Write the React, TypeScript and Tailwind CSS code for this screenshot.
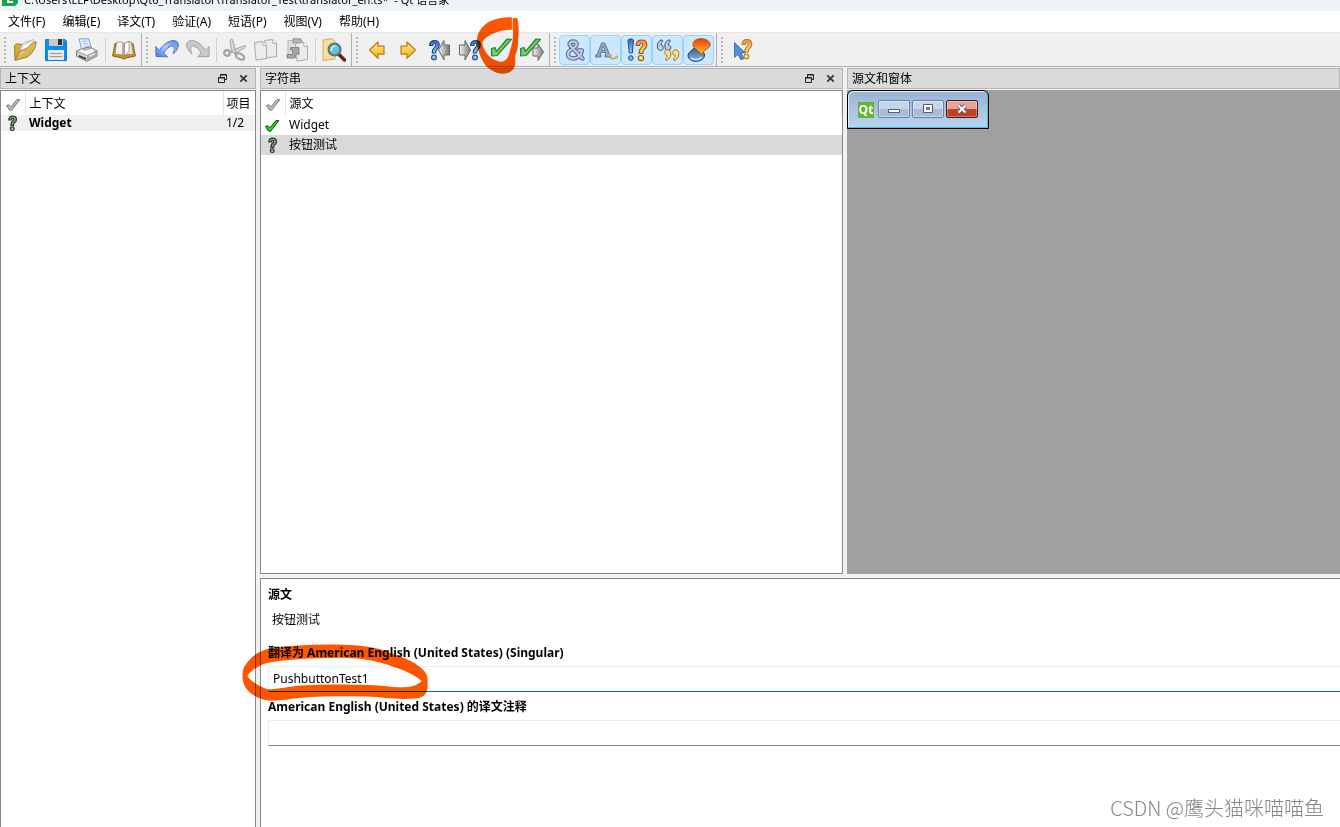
import React from "react";

type IconProps = { children: React.ReactNode };

function Svg({ children }: IconProps) {
  return (
    <svg viewBox="0 0 24 24" className="h-6 w-6 shrink-0" fill="none" aria-hidden="true">
      {children}
    </svg>
  );
}

function Defs() {
  return (
    <svg className="absolute h-0 w-0" aria-hidden="true">
      <defs>
        <linearGradient id="gold" x1="0" y1="0" x2="0" y2="1">
          <stop offset="0" stopColor="#fff29a" />
          <stop offset="1" stopColor="#f5a800" />
        </linearGradient>
        <linearGradient id="folder" x1="0" y1="0" x2="1" y2="1">
          <stop offset="0" stopColor="#f7e08e" />
          <stop offset="1" stopColor="#c8962a" />
        </linearGradient>
        <linearGradient id="blue" x1="0" y1="0" x2="0" y2="1">
          <stop offset="0" stopColor="#2f62c4" />
          <stop offset="1" stopColor="#8fd0ff" />
        </linearGradient>
        <linearGradient id="undo" x1="0" y1="1" x2="1" y2="0">
          <stop offset="0" stopColor="#3f78f2" />
          <stop offset="0.5" stopColor="#a9cbff" />
          <stop offset="1" stopColor="#5584dc" />
        </linearGradient>
        <linearGradient id="grey" x1="0" y1="0" x2="1" y2="0">
          <stop offset="0" stopColor="#f2f2f2" />
          <stop offset="1" stopColor="#777777" />
        </linearGradient>
        <linearGradient id="orange" x1="0" y1="0" x2="0" y2="1">
          <stop offset="0" stopColor="#ff8a3c" />
          <stop offset="1" stopColor="#ffe27a" />
        </linearGradient>
        <linearGradient id="flame" x1="0" y1="0" x2="0" y2="1">
          <stop offset="0" stopColor="#f03a08" />
          <stop offset="1" stopColor="#ffc928" />
        </linearGradient>
        <linearGradient id="drop" x1="0" y1="0" x2="0" y2="1">
          <stop offset="0" stopColor="#23477e" />
          <stop offset="1" stopColor="#7db4ea" />
        </linearGradient>
        <linearGradient id="green" x1="0" y1="0" x2="1" y2="1">
          <stop offset="0" stopColor="#3fae3f" />
          <stop offset="1" stopColor="#a9e8a4" />
        </linearGradient>
      </defs>
    </svg>
  );
}

const QPATH = "M1 5.2C1 1.9 3.2.4 5.6.4c2.7 0 4.7 1.6 4.7 4.4 0 2.2-1.2 3.3-2.4 4.3-.9.8-1.1 1.3-1.1 3.3H3.6c0-3 .4-4 1.8-5.2 1-.9 1.5-1.3 1.5-2.3 0-.9-.5-1.5-1.4-1.5-.9 0-1.4.6-1.4 1.8z";

function Question({ fill, stroke, dot }: { fill: string; stroke: string; dot: string }) {
  return (
    <g stroke={stroke} strokeWidth="1">
      <path d={QPATH} fill={fill} />
      <circle cx="5.2" cy="16.6" r="2.3" fill={dot} />
    </g>
  );
}

function OpenIcon() {
  return (
    <Svg>
      <path d="M1.5 7.5 3 6h4l1 1 7-3.5 2 1L6 21l-4 1z" fill="#d9aa38" stroke="#9c7a2a" />
      <path d="M5.5 14 10 5.5l10-4 1.5 4L12 14z" fill="#fff" stroke="#b5b09a" strokeWidth=".8" />
      <path d="m7 12.5 4-6 9-3.5" stroke="#ccc" />
      <path d="M2.2 22.3 7 12.6c5-.7 9-3 11.7-7l4.4-1.9c-.4 7-4 12-9 15.3z" fill="url(#folder)" stroke="#a37a22" />
    </Svg>
  );
}

function SaveIcon() {
  return (
    <Svg>
      <path d="M1.5 1.5h19.5l1.5 1.500v19.500h-21z" fill="#0a8fee" stroke="#0680dc" />
      <path d="M5 1h14v7H5z" fill="#c9c9c9" />
      <path d="M14 1h4v6h-4z" fill="#333" />
      <path d="M4 12h16v10H4z" fill="#e6e6e6" />
      <path d="M6 15.500h12M6 18.500h12" stroke="#999" />
    </Svg>
  );
}

function PrintIcon() {
  return (
    <Svg>
      <path d="m4 1 9.5-.3 3 9.3-9.5 2.5z" fill="#e4efff" stroke="#6f9fe8" />
      <path d="M7 3.5 12 3M8 6l5-.7M9 8.5l5-.8" stroke="#9abdf0" />
      <path d="m1.5 13 6-2.5 7-1.5 7.5 4v5l-10 5.2-10.5-5z" fill="#d2d2d2" stroke="#777" />
      <path d="m1.7 13 6-2.5 1 1.8 7-1.6-1.2-1.6L22 13l-10 4.5z" fill="#f6f6f6" stroke="#888" strokeWidth=".8" />
      <path d="m12 17.5 10-4.5v5l-10 5z" fill="#a8a8a8" />
      <path d="m4 17 7 3v1.8l-7-3z" fill="#333" />
      <path d="m14 18.5 6-3" stroke="#e9e9e9" strokeWidth="1.5" />
      <circle cx="19.5" cy="14" r="1" fill="#62c941" />
    </Svg>
  );
}

function BookIcon() {
  return (
    <Svg>
      <path d="M3 5.500.6 18l9.400 2 2 1.300 2-1.300 9.400-2L21 5.500z" fill="#d08f1c" stroke="#94610f" />
      <path d="M4.500 4.500C7 3.300 10 3.500 12 5.500v12.500c-2.500-1.700-5.500-2-9-1.500z" fill="#f2f2f0" stroke="#8d8778" strokeWidth=".8" />
      <path d="M12 5.500 17 3.500l2.500.8L21.300 16.500c-3.500-.3-6.500-.2-9.300 1.500z" fill="#e2e2de" stroke="#8d8778" strokeWidth=".8" />
      <path d="M10.500 5.200V17M12 5.500v12.500" stroke="#a5a29a" strokeWidth=".8" />
      <path d="m12.500 5.500 4.500-2.200v10.200l-4.500 4z" fill="#fff" stroke="#77736a" strokeWidth=".6" />
    </Svg>
  );
}

function UndoShape({ fill, stroke }: { fill: string; stroke: string }) {
  return (
    <path
      d="M.8 8.500 1 18.500l11.500.3-3.700-3.500C11 11 14.500 8 17.300 8c2.200 0 2.700 3.300.7 8 4-3 5.800-7.500 5.200-10.200C22.500 2.700 19 2 15.500 3 11 4.500 7 8 4.500 12.300z"
      fill={fill}
      stroke={stroke}
      strokeLinejoin="round"
    />
  );
}

function UndoIcon() {
  return <Svg><UndoShape fill="url(#undo)" stroke="#4973be" /></Svg>;
}

function RedoIcon() {
  return <Svg><g transform="matrix(-1 0 0 1 24 0)"><UndoShape fill="#c9c9c9" stroke="#a0a0a0" /></g></Svg>;
}

function CutIcon() {
  return (
    <Svg>
      <path d="M9 14 7 3.500C6.800 1.500 8.500 .5 9.500 1.500l3 11zM10 12l11.500-4.500c1.500-.3 1.500 1.300.5 2L12 15.500z" fill="#d8d8d8" stroke="#a3a3a3" />
      <circle cx="4" cy="15" r="2.800" stroke="#a3a3a3" strokeWidth="2.200" />
      <path d="m7 14 4-.5 2 3" stroke="#a3a3a3" strokeWidth="2.200" />
      <ellipse cx="17" cy="18.500" rx="4.500" ry="2.600" transform="rotate(28 17 18.500)" stroke="#a3a3a3" strokeWidth="2.200" />
      <circle cx="10.700" cy="13" r="1" fill="#eee" />
    </Svg>
  );
}

function Page({ x, y }: { x: number; y: number }) {
  return (
    <g transform={`translate(${x} ${y})`}>
      <path d="M.5 1.500 8.500.5l4 3.500v13.500L2 19z" fill="#ececec" stroke="#ababab" />
      <path d="m8.500.5.500 4 3.500-.5" stroke="#ababab" fill="#fff" />
    </g>
  );
}

function CopyIcon() {
  return <Svg><Page x={10} y={1} /><Page x={0} y={3} /></Svg>;
}

function PasteIcon() {
  return (
    <Svg>
      <path d="M3 2.500h14v17H3z" fill="#dedede" stroke="#b5b5b5" />
      <path d="M8 .8h8v4.200H8z" fill="#b5b5b5" stroke="#909090" />
      <Page x={10} y={4} />
      <path d="M2 16.500h5.500V12H5.500V9.500H14v7.500l-2.500-2-1.500 5H2z" fill="#a5a5a5" stroke="#868686" />
    </Svg>
  );
}

function FindIcon() {
  return (
    <Svg>
      <path d="m1 2 9-1.500 3 3V21L1 22.500z" fill="#f4dfa0" stroke="#cfae5d" />
      <path d="m16.500 16 6 6" stroke="#5e240d" strokeWidth="3.500" strokeLinecap="round" />
      <circle cx="12.500" cy="11.500" r="6" fill="#65c3d7" stroke="#5c7076" strokeWidth="2" />
      <path d="M9.500 13c-.5-3 1-5 4-5" stroke="#d7f5fa" strokeWidth="1.500" />
    </Svg>
  );
}

const LEFT = "M4.500 12 13 4v4.200h6v8h-6v4.200z";

function PrevIcon() {
  return <Svg><path d={LEFT} fill="url(#gold)" stroke="#b97d12" strokeWidth="1.200" strokeLinejoin="round" /></Svg>;
}

function NextIcon() {
  return <Svg><path d={LEFT} transform="matrix(-1 0 0 1 24 0)" fill="url(#gold)" stroke="#b97d12" strokeWidth="1.200" strokeLinejoin="round" /></Svg>;
}

function PrevUnfinishedIcon() {
  return (
    <Svg>
      <path d="m11.500 12 5.500-9.500V7h5.500v10H17v5z" fill="url(#grey)" stroke="#666" />
      <g transform="translate(1.500 2) scale(1.050)"><Question fill="url(#blue)" stroke="#1c458f" dot="#79c4fb" /></g>
    </Svg>
  );
}

function NextUnfinishedIcon() {
  return (
    <Svg>
      <path d="M12.500 12 7 2.500V7H1.500v10H7v5z" fill="url(#grey)" stroke="#666" />
      <g transform="translate(11.500 2) scale(1.050)"><Question fill="url(#blue)" stroke="#1c458f" dot="#79c4fb" /></g>
    </Svg>
  );
}

const CHECK = "M2.500 10.500 6 9.500l1.500 4L18 1l4.500.3L8 17.500l-5.500.3z";

function DoneIcon() {
  return (
    <Svg>
      <path d={CHECK} fill="url(#green)" stroke="#26882a" strokeWidth="1.200" strokeLinejoin="round" />
    </Svg>
  );
}

function DoneNextIcon() {
  return (
    <Svg>
      <path d="m23.500 14-5.500-8v4h-5v8h5v4.500z" fill="url(#grey)" stroke="#666" />
      <path d={CHECK} transform="translate(-2 0)" fill="url(#green)" stroke="#26882a" strokeWidth="1.200" strokeLinejoin="round" />
    </Svg>
  );
}

function AmpIcon() {
  const d = "M19.500 20.500 8 8.500C5 5 7.500 3.500 10.200 3.500s4.800 2 2.300 5C10.500 10.500 5 12 5 16s3.500 4.800 7 4.300c4-.6 6.500-4 6.800-7.800H15.500";
  return (
    <Svg>
      <g strokeLinecap="round" strokeLinejoin="round">
        <path d={d} stroke="#56658f" strokeWidth="4.400" />
        <path d={d} stroke="#b9c9e6" strokeWidth="2.400" />
      </g>
    </Svg>
  );
}

function AccelIcon() {
  return (
    <Svg>
      <path fillRule="evenodd" d="M1.500 19v-2H3L7.500 5h3.300l5 12H17v2h-6v-2h1l-.8-2.500H6.700L6 17h1v2zM7.500 12.500H11L9.300 8z" fill="#96abc6" stroke="#526888" strokeWidth=".8" />
      <path d="M15.500 17c1 4 6 4.500 8 .8" stroke="#b08b40" strokeWidth="2" />
      <path d="M15.500 16.500c1 4 6 4.500 8 .8" stroke="#ffe291" strokeWidth="1" />
    </Svg>
  );
}

function PunctuationIcon() {
  return (
    <Svg>
      <path d="M3 2.500c0-2 5.500-2 5.500 0L7.300 15h-3z" fill="url(#blue)" stroke="#294481" />
      <circle cx="5.800" cy="20" r="2.300" fill="#56c9ff" stroke="#294481" />
      <g transform="translate(10 1.500) scale(1.150 1.120)"><Question fill="url(#orange)" stroke="#995919" dot="#ffe56c" /></g>
    </Svg>
  );
}

function PhraseIcon() {
  const q = "M5.500.8C2.500 1.500.8 3.700.8 7c0 2.800 1.200 4.500 3.200 4.500 1.800 0 2.800-1.200 2.800-2.800C6.800 7 5.800 6 4.500 6 4.500 4 5 3 6.300 2.200z";
  return (
    <Svg>
      <path d={q} transform="translate(.5 1)" fill="#b9cce9" stroke="#3d4f80" />
      <path d={q} transform="translate(8 1)" fill="#b9cce9" stroke="#3d4f80" />
      <path d={q} transform="rotate(180 7.800 11.600)" fill="#ffe07c" stroke="#a4722c" />
      <path d={q} transform="rotate(180 11.800 11.600)" fill="#ffe07c" stroke="#a4722c" />
    </Svg>
  );
}

function PlaceIcon() {
  return (
    <Svg>
      <path d="M10.500 5.500c0 4-9.500 7.500-9.500 12C1 21 4.500 23.300 9 23.300s8.500-2.500 8.500-6.300c0-4-7-6-7-11.500z" fill="url(#drop)" stroke="#24375b" />
      <path d="M4 19.500c2 3 9 2.500 10.500-.8" stroke="#c7e6ff" strokeWidth="1.500" />
      <path d="M6 7C5.500 3 9.500.7 14 .7S23.500 3 23.300 7c-.3 3.500-8 5-7.800 10C11 12.500 6.500 10.500 6 7z" fill="url(#flame)" stroke="#a25716" />
    </Svg>
  );
}

function WhatsThisIcon() {
  const arrow = "M4.500 4.500v15l3.500-3 3 5.500 3-1.500-3-5.500h4.500z";
  return (
    <Svg>
      <path d={arrow} stroke="#f7fbff" strokeWidth="2.500" />
      <path d={arrow} fill="#4a93d8" stroke="#405a85" strokeWidth=".8" />
      <g transform="translate(11 1) scale(1.050)"><Question fill="url(#orange)" stroke="#b47726" dot="#ffdc54" /></g>
    </Svg>
  );
}

function SmallCheck({ on }: { on?: boolean }) {
  return (
    <svg viewBox="0 0 16 16" className="h-4 w-4" aria-hidden="true">
      <path d="m1.500 9.500 2.500-.7 2 2 6-7.300 2.800.2L6.500 14.300 4.500 14z" fill={on ? "#19e619" : "#bdbdbd"} stroke={on ? "#0b3d0b" : "#777"} strokeLinejoin="round" />
    </svg>
  );
}

function SmallQuestion() {
  return (
    <svg viewBox="0 0 16 16" className="h-4 w-4" aria-hidden="true">
      <g transform="translate(4 .7) scale(.82 .78)">
        <g stroke="#2c3f33" strokeWidth="1.600">
          <path d={QPATH} fill="#8fae84" />
          <circle cx="5.2" cy="16.6" r="2.3" fill="#bccb62" />
        </g>
      </g>
    </svg>
  );
}

function Tool({ label, icon, on, children }: { label: string; icon: React.ReactNode; on?: boolean; children?: React.ReactNode }) {
  return (
    <div className="relative">
      <button
        type="button"
        aria-label={label}
        aria-pressed={on}
        className={
          on
            ? "flex h-[30px] w-[31px] items-center justify-center rounded-sm border border-[#99d1ff] bg-[#cce8ff]"
            : "flex h-[30px] w-[31px] items-center justify-center"
        }
      >
        {icon}
      </button>
      {children}
    </div>
  );
}

function Bar({ label, children, last }: { label: string; children: React.ReactNode; last?: boolean }) {
  return (
    <div
      role="toolbar"
      aria-label={label}
      className={last ? "flex flex-1 items-center" : "flex items-center border-r border-[#b0b0b0] pr-0.5"}
    >
      <span className="ml-1 mr-[3px] h-[26px] border-l-2 border-dotted border-[#bababa]" />
      {children}
    </div>
  );
}

function Sep() {
  return <span className="mx-[2px] h-6 w-0.5 border-r border-[#d0d0d0]" />;
}

function DockTitle({ title, closable }: { title: string; closable?: boolean }) {
  return (
    <header className="flex h-[21px] shrink-0 items-center justify-between border border-[#b4b4b4] bg-[#dadada] pl-1 pr-[7px]">
      <h2>{title}</h2>
      {closable && (
        <div className="flex gap-3">
          <button type="button" aria-label="浮动">
            <svg viewBox="0 0 9 9" className="h-[9px] w-[9px]" fill="none" stroke="#222" aria-hidden="true">
              <path d="M2.500 3.500v-3h6v5h-2M2 1h7M.5 3.500h6v5h-6zM0 4h7" />
            </svg>
          </button>
          <button type="button" aria-label="关闭">
            <svg viewBox="0 0 9 9" className="h-[9px] w-[9px]" stroke="#333" strokeWidth="1.700" aria-hidden="true">
              <path d="m1.300 1.300 6.400 6.400M7.700 1.300 1.300 7.700" />
            </svg>
          </button>
        </div>
      )}
    </header>
  );
}

function PreviewButton({ label, close, children }: { label: string; close?: boolean; children: React.ReactNode }) {
  return (
    <button
      type="button"
      aria-label={label}
      className={
        close
          ? "flex h-[18px] w-8 items-center justify-center rounded-[2px] border border-[#4a1822] bg-linear-to-b from-[#e8a596] from-50% to-[#c04226] to-50% shadow-[inset_0_0_0_1px_rgba(255,255,255,0.3)]"
          : "flex h-[18px] w-8 items-center justify-center rounded-[2px] border border-[#6b819e] bg-linear-to-b from-[#c3d6ea] from-50% to-[#a4bdd8] to-50% shadow-[inset_0_0_0_1px_rgba(255,255,255,0.4)]"
      }
    >
      <svg viewBox="0 0 12 10" className="h-[10px] w-3" aria-hidden="true">{children}</svg>
    </button>
  );
}

function ToolbarMark() {
  return (
    <svg viewBox="138 45 132 180" className="pointer-events-none absolute -top-[19px] left-[-9px] z-10 h-[60px] w-[44px] mix-blend-multiply" aria-hidden="true">
      <path
        fillRule="evenodd"
        fill="#ff5500"
        d="M246 49C222 48 200 52 182 60C158 72 143 92 141 115C140 145 152 172 168 195C184 210 202 218 218 218C238 217 250 210 254 196C258 182 254 172 257 160C264 144 264 132 264 118C268 92 266 70 262 51L248 51ZM247 86C222 86 200 92 184 100C168 109 157 118 157 127C160 148 174 166 190 175C202 181 210 184 216 182C232 178 236 166 240 150C246 132 251 110 249 86Z"
      />
      <path d="M247 50V86" stroke="#fff" strokeWidth="2" />
    </svg>
  );
}

function FieldMark() {
  return (
    <svg viewBox="36 222 562 174" className="pointer-events-none absolute -left-[19px] top-[65px] z-10 h-[58px] w-[187px] mix-blend-multiply" aria-hidden="true">
      <path
        fillRule="evenodd"
        fill="#ff5500"
        d="M115 236C190 224 270 222 340 224C400 226 445 232 480 248C520 262 550 272 575 295C592 308 595 320 594 350C592 372 582 384 555 386C500 390 460 382 410 380C350 378 280 378 235 382C180 386 150 394 115 392C80 386 58 370 45 350C35 330 36 308 42 292C58 262 85 244 115 236ZM115 278C170 267 250 264 330 263C400 264 450 274 490 290C530 302 560 318 576 333C560 350 535 353 505 352C470 348 430 344 370 344C300 343 230 344 185 350C160 352 130 359 112 358C88 348 64 336 52 318C66 298 90 284 115 278Z"
      />
    </svg>
  );
}

export default function App() {
  return (
    <div className="flex h-screen flex-col overflow-hidden bg-[#f0f0f0] font-['Noto_Sans','Noto_Sans_CJK_SC',sans-serif] text-xs leading-4 text-black">
      <Defs />
      <div className="flex h-[11px] shrink-0 items-end overflow-hidden bg-[#eef3f7] pl-0.5">
        <svg viewBox="0 0 16 16" className="mb-[5px] h-4 w-4 shrink-0" aria-hidden="true">
          <path d="M0 0h16v13l-3 3H0z" fill="#17a34a" />
          <path d="M6 4v8h5" stroke="#fff" strokeWidth="2" fill="none" />
        </svg>
        <h1 className="mb-[3px] ml-1.5 whitespace-pre text-[11px]">{"C:\\Users\\LLF\\Desktop\\Qt6_Translator\\Translator_Test\\translator_en.ts*  - Qt 语言家"}</h1>
      </div>

      <nav aria-label="主菜单" className="flex h-[21px] shrink-0 items-center gap-[17px] bg-white pl-2">
        {["文件(F)", "编辑(E)", "译文(T)", "验证(A)", "短语(P)", "视图(V)", "帮助(H)"].map((m) => (
          <button key={m} type="button">{m}</button>
        ))}
      </nav>

      <div className="flex h-[35px] shrink-0 border-y border-t-[#e6e6e6] border-b-[#b0b0b0]">
        <Bar label="文件">
          <Tool label="打开" icon={<OpenIcon />} />
          <Tool label="保存" icon={<SaveIcon />} />
          <Tool label="打印" icon={<PrintIcon />} />
          <Sep />
          <Tool label="打开短语书" icon={<BookIcon />} />
        </Bar>
        <Bar label="编辑">
          <Tool label="撤销" icon={<UndoIcon />} />
          <Tool label="重做" icon={<RedoIcon />} />
          <Sep />
          <Tool label="剪切" icon={<CutIcon />} />
          <Tool label="复制" icon={<CopyIcon />} />
          <Tool label="粘贴" icon={<PasteIcon />} />
          <Sep />
          <Tool label="查找" icon={<FindIcon />} />
        </Bar>
        <Bar label="译文">
          <Tool label="上一个" icon={<PrevIcon />} />
          <Tool label="下一个" icon={<NextIcon />} />
          <Tool label="上一个未完成" icon={<PrevUnfinishedIcon />} />
          <Tool label="下一个未完成" icon={<NextUnfinishedIcon />} />
          <Tool label="完成" icon={<DoneIcon />}>
            <ToolbarMark />
          </Tool>
          <Tool label="完成并转到下一个" icon={<DoneNextIcon />} />
        </Bar>
        <Bar label="验证">
          <Tool on label="加速键" icon={<AmpIcon />} />
          <Tool on label="空白" icon={<AccelIcon />} />
          <Tool on label="标点" icon={<PunctuationIcon />} />
          <Tool on label="短语" icon={<PhraseIcon />} />
          <Tool on label="占位符" icon={<PlaceIcon />} />
        </Bar>
        <Bar label="帮助" last>
          <Tool label="这是什么" icon={<WhatsThisIcon />} />
        </Bar>
      </div>

      <main className="flex min-h-0 flex-1 gap-1 pt-px">
        <section aria-label="上下文" className="flex w-64 shrink-0 flex-col gap-px">
          <DockTitle title="上下文" closable />
          <div className="flex-1 border border-b-0 border-[#828790] bg-white">
            <table className="w-full table-fixed border-collapse text-left">
              <colgroup>
                <col className="w-6" />
                <col />
                <col className="w-8" />
              </colgroup>
              <thead>
                <tr className="h-6">
                  <th className="border-r border-[#e5e5e5] pl-1 pt-0.5"><SmallCheck /></th>
                  <th className="border-r border-[#e5e5e5] pl-1 pt-0.5 font-normal">上下文</th>
                  <th className="pl-[3px] pt-0.5 font-normal">项目</th>
                </tr>
              </thead>
              <tbody>
                <tr className="h-4 bg-[#f0f0f0]">
                  <td className="pl-[3px]"><SmallQuestion /></td>
                  <td className="pl-1 font-bold">Widget</td>
                  <td className="pl-[3px]">1/2</td>
                </tr>
              </tbody>
            </table>
          </div>
        </section>

        <div className="flex min-w-0 flex-1 flex-col gap-1">
          <div className="flex min-h-0 flex-1 gap-1">
            <section aria-label="字符串" className="flex min-w-0 flex-[583] flex-col gap-px">
              <DockTitle title="字符串" closable />
              <div className="flex-1 border border-[#828790] bg-white">
                <table className="w-full table-fixed border-collapse text-left">
                  <colgroup>
                    <col className="w-6" />
                    <col />
                  </colgroup>
                  <thead>
                    <tr className="h-6">
                      <th className="border-r border-[#e5e5e5] pl-1 pt-0.5"><SmallCheck /></th>
                      <th className="border-r border-[#e5e5e5] pl-1 pt-0.5 font-normal">源文</th>
                    </tr>
                  </thead>
                  <tbody>
                    <tr className="h-5">
                      <td className="pl-[3px]"><SmallCheck on /></td>
                      <td className="pl-1">Widget</td>
                    </tr>
                    <tr className="h-5 bg-[#d9d9d9]">
                      <td className="pl-[3px]"><SmallQuestion /></td>
                      <td className="pl-1">按钮测试</td>
                    </tr>
                  </tbody>
                </table>
              </div>
            </section>

            <section aria-label="源文和窗体" className="flex min-w-0 flex-[493] flex-col gap-px">
              <DockTitle title="源文和窗体" />
              <div className="flex-1 bg-[#a0a0a0]">
                <div className="flex h-[39px] w-[142px] gap-0.5 rounded-t-md border border-black bg-linear-to-b from-[#98b4d2] to-[#bbd3ee] pl-2.5 pt-[9px] shadow-[inset_-1px_-1px_0_#35c3e2,inset_1px_1px_0_#e6eef7]">
                  <span className="mr-0.5 mt-0.5 flex h-4 w-4 items-center justify-center bg-[#67b52f] font-['Open_Sans',sans-serif] text-xs font-bold leading-4 text-white">Qt</span>
                  <PreviewButton label="最小化">
                    <path d="M.5 5.500h11v3H.5z" fill="#fff" stroke="#555e70" />
                  </PreviewButton>
                  <PreviewButton label="最大化">
                    <path d="M1.500.500h9v8h-9z" fill="#fff" stroke="#555e70" />
                    <path d="M4.500 3.500h3v2h-3z" fill="#9db7d3" stroke="#555e70" />
                  </PreviewButton>
                  <PreviewButton label="关闭窗口" close>
                    <path d="m2.500 1.500 7 7M9.500 1.500l-7 7" stroke="#545a70" strokeWidth="4" />
                    <path d="m2.500 1.500 7 7M9.500 1.500l-7 7" stroke="#fff" strokeWidth="2.200" />
                  </PreviewButton>
                </div>
              </div>
            </section>
          </div>

          <section aria-label="翻译" className="relative h-[249px] shrink-0 border-l border-t border-[#828790] bg-white pl-[7px] pt-2">
            <h3 className="font-bold">源文</h3>
            <p className="mt-[9px] pl-1">按钮测试</p>
            <label htmlFor="translation" className="mt-[17px] block font-bold">翻译为 American English (United States) (Singular)</label>
            <input
              id="translation"
              defaultValue="PushbuttonTest1"
              className="mt-[5px] block h-[26px] w-full border border-r-0 border-[#ececec] border-b-[#0067c0] bg-white pb-0.5 pl-1 outline-none"
            />
            <label htmlFor="comment" className="mt-[7px] block font-bold">American English (United States) 的译文注释</label>
            <textarea
              id="comment"
              className="mt-[5px] block h-[26px] w-full resize-none border border-r-0 border-[#ececec] border-b-[#868686] bg-white pl-1 outline-none"
            />
            <FieldMark />
            <p className="absolute bottom-[7px] right-4 font-['Noto_Sans_CJK_SC',sans-serif] text-xl font-light leading-6 text-[#858585]">CSDN @鹰头猫咪喵喵鱼</p>
          </section>
        </div>
      </main>
    </div>
  );
}
